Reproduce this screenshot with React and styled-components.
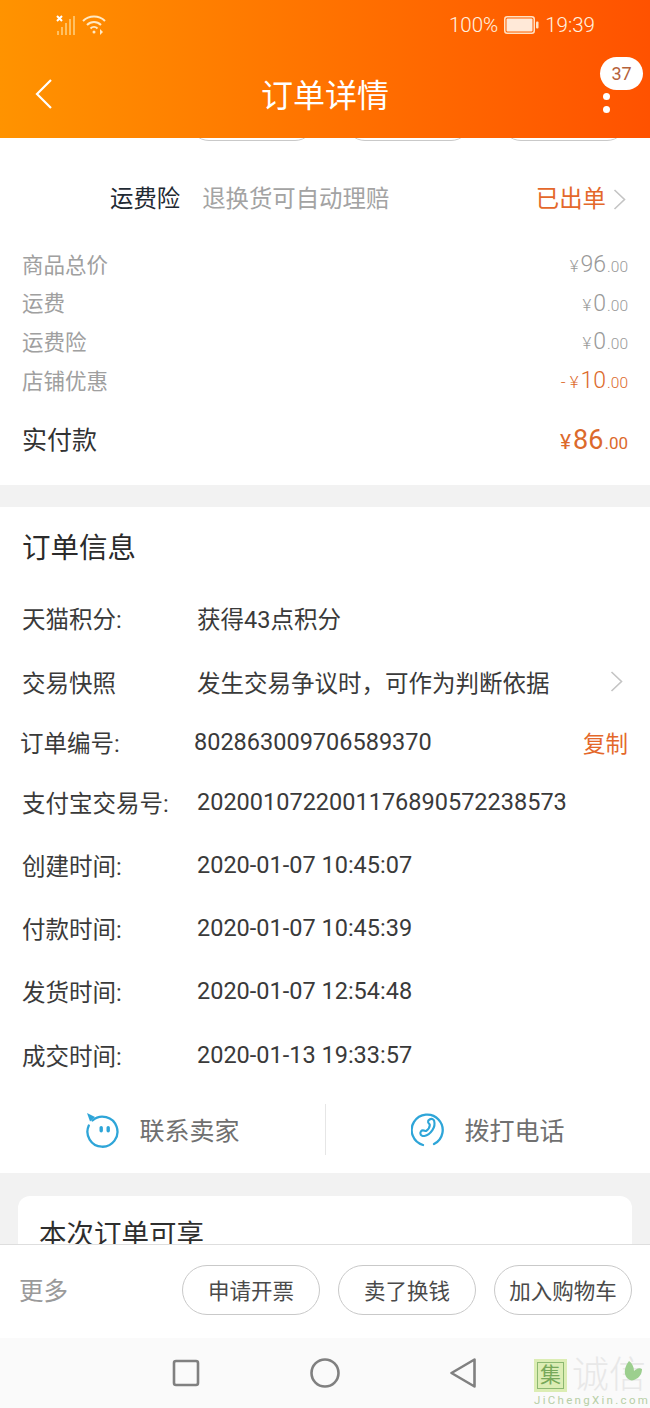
import React from 'react';
import styled, { createGlobalStyle } from 'styled-components';

const Global = createGlobalStyle`
  html, body { margin: 0; padding: 0; background: #fff; }
  * { box-sizing: border-box; }
  body { font-family: Roboto, "Noto Sans CJK SC", sans-serif; }
`;

const Screen = styled.div`
  position: relative;
  width: 650px;
  height: 1408px;
  display: flex;
  flex-direction: column;
  overflow: hidden;
  background: #fff;
`;

const Header = styled.header`
  flex: none;
  height: 138px;
  background: linear-gradient(90deg, #ff9300 0%, #ff5200 100%);
  color: #fff;
  display: flex;
  flex-direction: column;
`;

const StatusBar = styled.div`
  height: 50px;
  padding: 13px 55px 0 55px;
  display: flex;
  align-items: flex-start;
  justify-content: space-between;
`;

const StatusGroup = styled.div`
  height: 24px;
  display: flex;
  align-items: center;
  gap: ${p => p.$gap || 6}px;
  font-size: 20.5px;
  font-weight: 300;
  color: #fff3e0;
`;

const NavBar = styled.div`
  position: relative;
  flex: 1;
  display: flex;
  align-items: center;
  justify-content: center;
  padding-bottom: 2px;
`;

const Title = styled.h1`
  margin: 0;
  font-size: 32px;
  font-weight: 400;
`;

const BackButton = styled.span`
  position: absolute;
  left: 34px;
  top: 28px;
  display: flex;
`;

const Badge = styled.span`
  position: absolute;
  left: 600px;
  top: 7px;
  width: 43px;
  height: 33px;
  border-radius: 17px;
  background: #fff;
  color: #b5613a;
  font-size: 18px;
  display: flex;
  align-items: center;
  justify-content: center;
`;

const MoreDots = styled.span`
  position: absolute;
  left: 603px;
  top: 43px;
  display: flex;
  flex-direction: column;
  gap: 6px;
  i {
    width: 7px;
    height: 7px;
    border-radius: 50%;
    background: #fff;
  }
`;

const Scroller = styled.main`
  flex: 1;
  min-height: 0;
  overflow: hidden;
  background: #f2f2f2;
`;

const Section = styled.section`
  background: #fff;
`;

const ClippedPills = styled.div`
  height: 3px;
  overflow: hidden;
  display: flex;
  align-items: flex-end;
  padding-left: 189px;
  gap: 30px;
  span {
    flex: none;
    width: 126px;
    height: 40px;
    border: 1px solid #c9c9c9;
    border-radius: 20px;
  }
`;

const Insurance = styled.div`
  height: 103px;
  padding: 41px 24px 0 110px;
  display: flex;
  align-items: flex-start;
  font-size: 23.4px;
  line-height: 34px;
`;

const InsuranceName = styled.span`
  color: #1f2a33;
`;

const InsuranceNote = styled.span`
  color: #a3a3a3;
  margin-left: 22px;
  flex: 1;
`;

const Issued = styled.span`
  color: #e4682b;
  display: flex;
  align-items: center;
  gap: 7px;
`;

const PriceList = styled.div`
  padding: 0 22px;
`;

const PriceRow = styled.div`
  height: 38.6px;
  display: flex;
  align-items: center;
  justify-content: space-between;
  font-size: 21.5px;
  color: #a0a0a0;
`;

const Amount = styled.span`
  display: flex;
  align-items: baseline;
  margin-top: ${p => (p.$large ? 0 : 3)}px;
  color: ${p => (p.$accent ? '#dc6a2c' : '#999')};
  font-size: ${p => (p.$large ? 27 : 23)}px;
  font-weight: ${p => (p.$large ? 400 : 300)};
  small { font-size: ${p => (p.$large ? 17 : 15.5)}px; }
  em { font-style: normal; font-size: ${p => (p.$large ? 21 : 17)}px; }
  b { font-weight: inherit; margin: 0 1px 0 2px; }
`;

const TotalRow = styled.div`
  height: 86.6px;
  padding: 0 22px 3.4px;
  display: flex;
  align-items: center;
  justify-content: space-between;
  font-size: 25px;
  color: #333;
`;

const TotalLabel = styled.span`
  margin-bottom: 4px;
`;

const Spacer = styled.div`
  height: ${p => p.$h}px;
`;

const InfoTitle = styled.h2`
  margin: 0;
  height: 78px;
  padding: 22px 22px 0;
  font-size: 28.5px;
  line-height: 40px;
  font-weight: 400;
  color: #2b2b2b;
`;

const InfoRow = styled.div`
  height: ${p => p.$h}px;
  padding-left: ${p => (p.$shift ? 20 : 22)}px;
  padding-right: 22px;
  display: flex;
  align-items: center;
  font-size: 23.5px;
  color: #3a3a3a;
`;

const InfoLabel = styled.span`
  flex: none;
  width: ${p => (p.$shift ? 174 : 175)}px;
  white-space: nowrap;
`;

const InfoValue = styled.span`
  flex: 1;
  white-space: nowrap;
`;

const RowChevron = styled.span`
  display: flex;
  margin-right: 5px;
`;

const CopyLink = styled.span`
  font-size: 22.5px;
  color: #e4682b;
`;

const Contact = styled.div`
  height: 87px;
  padding: 18px 0;
  display: grid;
  grid-template-columns: 1fr 1fr;
`;

const ContactItem = styled.div`
  display: flex;
  align-items: center;
  justify-content: center;
  gap: 19px;
  font-size: 25px;
  color: #707070;
  & + & { border-left: 1px solid #e6e6e6; }
`;

const ContactText = styled.span`
  margin-bottom: 2px;
`;

const PerkCard = styled.div`
  margin: 23px 18px 0;
  height: 100px;
  background: #fff;
  border-radius: 12px;
  padding: 19px 21px;
  font-size: 27.5px;
  line-height: 40px;
  color: #2e2e2e;
`;

const ActionBar = styled.footer`
  flex: none;
  height: 94px;
  border-top: 1px solid #dedede;
  background: #fff;
  padding: 20px 18px 0 19px;
  display: flex;
  align-items: flex-start;
  gap: 18px;
`;

const MoreLabel = styled.span`
  flex: 1;
  height: 50px;
  padding-bottom: 2px;
  display: flex;
  align-items: center;
  font-size: 24.5px;
  color: #9a9a9a;
`;

const Pill = styled.span`
  flex: none;
  width: 138px;
  height: 50px;
  padding-bottom: 2px;
  border: 1px solid #c9c9c9;
  border-radius: 25px;
  display: flex;
  align-items: center;
  justify-content: center;
  font-size: 21.5px;
  color: #4a4a4a;
  white-space: nowrap;
`;

const SystemNav = styled.nav`
  flex: none;
  height: 70px;
  background: #fafafa;
  padding: 0 173px 0 172px;
  display: flex;
  align-items: center;
  justify-content: space-between;
`;

const Watermark = styled.div`
  position: absolute;
  left: 534px;
  top: 1359px;
  width: 116px;
  display: flex;
  flex-direction: column;
  align-items: flex-start;
  pointer-events: none;
`;

const MarkTop = styled.div`
  display: flex;
  align-items: center;
  gap: 5px;
`;

const MarkBox = styled.span`
  width: 33px;
  height: 33px;
  background: #dcedb4;
  border: 3px solid #dcedb4;
  outline: 1.5px solid #8cb872;
  outline-offset: -4px;
  color: #77a85a;
  font-size: 21px;
  line-height: 27px;
  text-align: center;
`;

const MarkWord = styled.span`
  position: relative;
  font-size: 37px;
  line-height: 33px;
  color: #e8e8e8;
  font-weight: 300;
  white-space: nowrap;
`;

const MarkLeaf = styled.svg`
  position: absolute;
  left: 49px;
  top: 0;
`;

const MarkUrl = styled.span`
  margin-top: 1px;
  font-size: 11.5px;
  line-height: 14px;
  letter-spacing: 2.3px;
  color: #b7cfa6;
  white-space: nowrap;
`;

const Chevron = () => (
  <svg width="13" height="21" viewBox="0 0 13 21" fill="none">
    <path d="M1.5 1l10 9.5-10 9.5" stroke="#c4c4c4" strokeWidth="1.6" />
  </svg>
);

const Signal = () => (
  <svg width="22" height="24" viewBox="0 0 22 24">
    <path d="M2 3l5 5M7 3L2 8" stroke="#fff" strokeWidth="2" />
    <g fill="#ffc062">
      <rect x="2" y="18" width="2" height="4" />
      <rect x="6" y="14" width="2" height="8" />
      <rect x="10" y="10" width="2" height="12" />
      <rect x="14" y="6" width="2" height="16" />
      <rect x="18" y="3" width="2" height="19" />
    </g>
  </svg>
);

const Wifi = () => (
  <svg width="24" height="22" viewBox="0 0 24 22" fill="none" stroke="#ffe9c4" strokeWidth="2">
    <path d="M1 7c6-6 16-6 22 0" />
    <path d="M5 11c4-4 10-4 14 0" />
    <path d="M8.500 14.500c2-2 5-2 7 0" />
    <circle cx="12" cy="18" r="1.500" fill="#ffe9c4" stroke="none" />
    <path d="M18 15l3 3-3 3z" fill="#ffe9c4" stroke="none" />
  </svg>
);

const Battery = () => (
  <svg width="35" height="18" viewBox="0 0 35 18">
    <rect x="0.750" y="0.750" width="29.500" height="16.500" rx="2.500" fill="none" stroke="#ffe2c4" strokeWidth="1.500" />
    <rect x="2.500" y="2.500" width="26" height="13" rx="1" fill="#ffe9d8" />
    <rect x="32" y="5.500" width="2.500" height="7" rx="1" fill="#ffe2c4" />
  </svg>
);

const ChatIcon = () => (
  <svg width="35" height="36" viewBox="0 0 35 36" fill="none">
    <path d="M7.500 8.500A15 15 0 1 1 3.800 13.500" stroke="#2ea5d8" strokeWidth="2.300" strokeLinecap="round" />
    <path d="M2 1l8 4-5 4.500z" fill="#2ea5d8" />
    <rect x="14.500" y="14" width="3.400" height="6.500" rx="1.700" fill="#2ea5d8" />
    <rect x="21.500" y="14" width="3.400" height="6.500" rx="1.700" fill="#2ea5d8" />
  </svg>
);

const PhoneIcon = () => (
  <svg width="34" height="36" viewBox="0 0 34 36" fill="none" stroke="#2ea5d8" strokeWidth="2.300" strokeLinecap="round">
    <path d="M12 33A15.500 15.500 0 1 1 23 32" />
    <path d="M18.500 7.500c2-1.300 4-.6 4.600 1.200.9 3 .3 6.500-1.700 9.500s-5 5.300-8 5.800c-1.800.3-3.700-.5-4-2.400-.3-1.700.9-3.300 2.600-3.200 1.600.1 2.500 1.100 3.300.5 1.800-1.300 3.400-3.900 3.500-5.900.1-1-1.400-1.500-1.700-2.900-.2-1 .3-2 1.400-2.600z" strokeWidth="2.100" />
  </svg>
);

const prices = [
  { label: '商品总价', sign: '', value: '96' },
  { label: '运费', sign: '', value: '0' },
  { label: '运费险', sign: '', value: '0' },
  { label: '店铺优惠', sign: '- ', value: '10', accent: true },
];

const times = [
  ['创建时间:', '2020-01-07 10:45:07'],
  ['付款时间:', '2020-01-07 10:45:39'],
  ['发货时间:', '2020-01-07 12:54:48'],
  ['成交时间:', '2020-01-13 19:33:57'],
];

export default function App() {
  return (
    <Screen>
      <Global />
      <Header>
        <StatusBar>
          <StatusGroup $gap={5}>
            <Signal />
            <Wifi />
          </StatusGroup>
          <StatusGroup>
            <span>100%</span>
            <Battery />
            <span>19:39</span>
          </StatusGroup>
        </StatusBar>
        <NavBar>
          <BackButton>
            <svg width="20" height="32" viewBox="0 0 20 32" fill="none">
              <path d="M17 2L3 16l14 14" stroke="#fff" strokeWidth="2.200" />
            </svg>
          </BackButton>
          <Title>订单详情</Title>
          <Badge>37</Badge>
          <MoreDots><i /><i /></MoreDots>
        </NavBar>
      </Header>

      <Scroller>
        <Section>
          <ClippedPills><span /><span /><span /></ClippedPills>
          <Insurance>
            <InsuranceName>运费险</InsuranceName>
            <InsuranceNote>退换货可自动理赔</InsuranceNote>
            <Issued>已出单<Chevron /></Issued>
          </Insurance>
          <PriceList>
            {prices.map(p => (
              <PriceRow key={p.label}>
                <span>{p.label}</span>
                <Amount $accent={p.accent}>
                  <em>{p.sign}¥</em>
                  <b>{p.value}</b>
                  <small>.00</small>
                </Amount>
              </PriceRow>
            ))}
          </PriceList>
          <TotalRow>
            <TotalLabel>实付款</TotalLabel>
            <Amount $accent $large>
              <em>¥</em>
              <b>86</b>
              <small>.00</small>
            </Amount>
          </TotalRow>
        </Section>
        <Spacer $h={22} />
        <Section>
          <InfoTitle>订单信息</InfoTitle>
          <InfoRow $h={66}>
            <InfoLabel>天猫积分:</InfoLabel>
            <InfoValue>获得43点积分</InfoValue>
          </InfoRow>
          <InfoRow $h={62}>
            <InfoLabel>交易快照</InfoLabel>
            <InfoValue>{'发生交易争议时\uFF0C可作为判断依据'}</InfoValue>
            <RowChevron><Chevron /></RowChevron>
          </InfoRow>
          <InfoRow $shift $h={58}>
            <InfoLabel $shift>订单编号:</InfoLabel>
            <InfoValue>802863009706589370</InfoValue>
            <CopyLink>复制</CopyLink>
          </InfoRow>
          <InfoRow $h={62}>
            <InfoLabel>支付宝交易号:</InfoLabel>
            <InfoValue>2020010722001176890572238573</InfoValue>
          </InfoRow>
          {times.map(([label, value]) => (
            <InfoRow key={label} $h={63.3}>
              <InfoLabel>{label}</InfoLabel>
              <InfoValue>{value}</InfoValue>
            </InfoRow>
          ))}
          <Contact>
            <ContactItem><ChatIcon /><ContactText>联系卖家</ContactText></ContactItem>
            <ContactItem><PhoneIcon /><ContactText>拨打电话</ContactText></ContactItem>
          </Contact>
        </Section>
        <PerkCard>本次订单可享</PerkCard>
      </Scroller>

      <ActionBar>
        <MoreLabel>更多</MoreLabel>
        <Pill>申请开票</Pill>
        <Pill>卖了换钱</Pill>
        <Pill>加入购物车</Pill>
      </ActionBar>

      <SystemNav>
        <svg width="28" height="28" viewBox="0 0 28 28" fill="none">
          <rect x="2" y="2" width="24" height="24" rx="2" stroke="#808080" strokeWidth="2.600" />
        </svg>
        <svg width="30" height="30" viewBox="0 0 30 30" fill="none">
          <circle cx="15" cy="15" r="13.500" stroke="#808080" strokeWidth="2.600" />
        </svg>
        <svg width="27" height="32" viewBox="0 0 27 32" fill="none">
          <path d="M24.500 2.500v27L1.500 16z" stroke="#808080" strokeWidth="2.600" strokeLinejoin="round" />
        </svg>
      </SystemNav>

      <Watermark>
        <MarkTop>
          <MarkBox>集</MarkBox>
          <MarkWord>
            诚信
            <MarkLeaf width="22" height="26" viewBox="0 0 22 26">
              <path d="M8 2c-4 5-6 12-2 17 3 3 6 3 9 1 4-2 6-6 6-10-3-2-6 0-8 2 0-4-2-8-5-10z" fill="#9ccf8e" />
            </MarkLeaf>
          </MarkWord>
        </MarkTop>
        <MarkUrl>JiChengXin.com</MarkUrl>
      </Watermark>
    </Screen>
  );
}
